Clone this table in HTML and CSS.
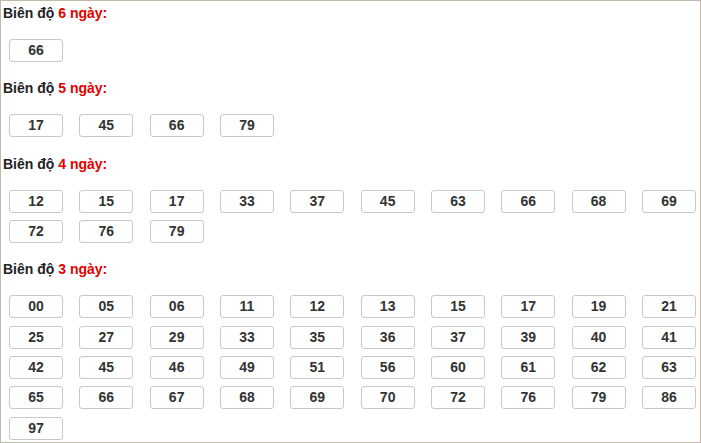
FILE: index.html
```html
<!DOCTYPE html>
<html>
<head>
<meta charset="utf-8">
<link rel="stylesheet" href="styles.css">
</head>
<body>
<div class="page">
  <div class="section">
    <div class="title">Biên độ <span class="red">6 ngày:</span></div>
    <div class="grid">
      <div class="num">66</div>
    </div>
  </div>
  <div class="section">
    <div class="title">Biên độ <span class="red">5 ngày:</span></div>
    <div class="grid">
      <div class="num">17</div><div class="num">45</div><div class="num">66</div><div class="num">79</div>
    </div>
  </div>
  <div class="section">
    <div class="title">Biên độ <span class="red">4 ngày:</span></div>
    <div class="grid">
      <div class="num">12</div><div class="num">15</div><div class="num">17</div><div class="num">33</div><div class="num">37</div><div class="num">45</div><div class="num">63</div><div class="num">66</div><div class="num">68</div><div class="num">69</div>
      <div class="num">72</div><div class="num">76</div><div class="num">79</div>
    </div>
  </div>
  <div class="section">
    <div class="title">Biên độ <span class="red">3 ngày:</span></div>
    <div class="grid">
      <div class="num">00</div><div class="num">05</div><div class="num">06</div><div class="num">11</div><div class="num">12</div><div class="num">13</div><div class="num">15</div><div class="num">17</div><div class="num">19</div><div class="num">21</div>
      <div class="num">25</div><div class="num">27</div><div class="num">29</div><div class="num">33</div><div class="num">35</div><div class="num">36</div><div class="num">37</div><div class="num">39</div><div class="num">40</div><div class="num">41</div>
      <div class="num">42</div><div class="num">45</div><div class="num">46</div><div class="num">49</div><div class="num">51</div><div class="num">56</div><div class="num">60</div><div class="num">61</div><div class="num">62</div><div class="num">63</div>
      <div class="num">65</div><div class="num">66</div><div class="num">67</div><div class="num">68</div><div class="num">69</div><div class="num">70</div><div class="num">72</div><div class="num">76</div><div class="num">79</div><div class="num">86</div>
      <div class="num">97</div>
    </div>
  </div>
</div>
</body>
</html>
```
FILE: styles.css
```css
html, body {
  margin: 0;
  padding: 0;
  background: #fff;
}
.page {
  width: 699px;
  height: 439px;
  border: 1px solid #c2b8a8;
  padding-top: 2px;
  box-sizing: content-box;
  font-family: "Liberation Sans", Arial, sans-serif;
  overflow: hidden;
}
.section {
  display: flex;
  flex-direction: column;
  gap: 16px;
  margin-bottom: 16.3px;
}
.title {
  font-size: 14px;
  font-weight: bold;
  line-height: 20px;
  color: #222;
  padding-left: 2px;
}
.red {
  color: #e30000;
}
.grid {
  display: grid;
  grid-template-columns: repeat(10, 54px);
  column-gap: 16.33px;
  row-gap: 7.4px;
  padding-left: 8px;
}
.num {
  height: 23px;
  box-sizing: border-box;
  border: 1px solid #c8c8c8;
  border-radius: 3px;
  font-size: 14px;
  font-weight: bold;
  color: #333;
  line-height: 21px;
  text-align: center;
}
```
